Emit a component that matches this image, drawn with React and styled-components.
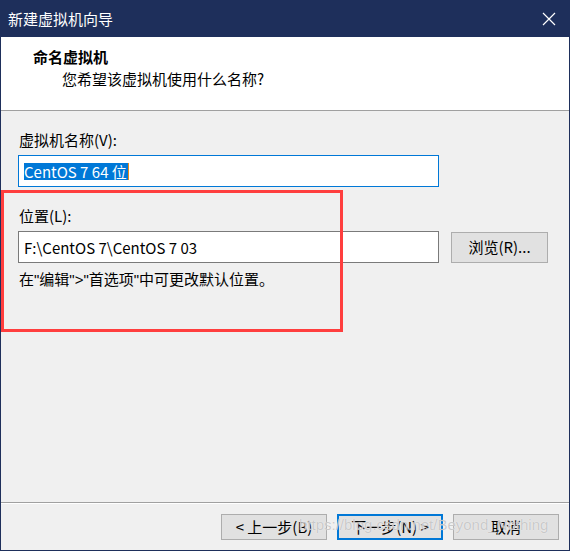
import React from "react";
import styled, { createGlobalStyle } from "styled-components";

const Global = createGlobalStyle`
  html, body { margin: 0; padding: 0; background: #f0f0f0; }
  * { box-sizing: border-box; }
  body { font-family: "Noto Sans CJK SC", "Noto Sans", sans-serif; }
`;

const Window = styled.div`
  position: relative;
  width: 570px;
  height: 551px;
  border: 1px solid #1e2f5b;
  border-top: none;
  display: flex;
  flex-direction: column;
  background: #f0f0f0;
  overflow: hidden;
`;

const TitleBar = styled.div`
  height: 37px;
  background: #1e2f5b;
  display: flex;
  align-items: center;
  justify-content: space-between;
  padding: 0 14px 0 8px;
  color: #fff;
  font-size: 15px;
  line-height: 20px;
  margin: 0 -1px;
`;

const CloseIcon = () => (
  <svg width="14" height="14" viewBox="0 0 14 14" aria-hidden="true">
    <path d="M1 1 L13 13 M13 1 L1 13" stroke="#ffffff" strokeWidth="1.2" fill="none" />
  </svg>
);

const Header = styled.div`
  height: 74px;
  background: #fff;
  border-bottom: 1px solid #a0a0a0;
  padding: 10px 0 0 32px;
`;

const HeaderTitle = styled.div`
  font-size: 15px;
  font-weight: 700;
  line-height: 20px;
  color: #000;
`;

const HeaderSub = styled.div`
  font-size: 15px;
  line-height: 20px;
  color: #000;
  padding-left: 29px;
  margin-top: 2px;
`;

const Body = styled.div`
  flex: 1;
  padding: 19px 0 0 17px;
  display: flex;
  flex-direction: column;
`;

const Label = styled.div`
  font-size: 15px;
  line-height: 20px;
  color: #000;
  padding-left: 1px;
  margin-top: ${(p) => p.$mt || 0}px;
`;

const Row = styled.div`
  display: flex;
  align-items: center;
  gap: 12px;
  margin-top: 5px;
`;

const Field = styled.div`
  width: 421px;
  height: 32px;
  background: #fff;
  border: 1px solid ${(p) => (p.$focused ? "#0078d7" : "#7a7a7a")};
  display: flex;
  align-items: center;
  padding-left: 5px;
  font-size: 15px;
  color: #000;
  white-space: pre;
`;

const Selected = styled.span`
  background: #0078d7;
  color: #fff;
  line-height: 17px;
  padding-right: 1px;
  border-right: 1px solid #e88a1a;
`;

const Button = styled.button`
  width: ${(p) => p.$w || 106}px;
  height: ${(p) => p.$h || 26}px;
  background: #e1e1e1;
  border: ${(p) => (p.$primary ? "2px solid #0078d7" : "1px solid #adadad")};
  font-family: "Noto Sans CJK SC", "Noto Sans", sans-serif;
  font-size: 15px;
  line-height: 18px;
  color: #000;
  padding: 0;
  display: flex;
  align-items: center;
  justify-content: center;
`;

const Hint = styled.div`
  font-family: "Liberation Sans", "Noto Sans CJK SC", sans-serif;
  font-size: 15px;
  line-height: 20px;
  color: #000;
  padding-left: 1px;
  margin-top: 7px;
`;

const Footer = styled.div`
  height: 48px;
  border-top: 1px solid #a0a0a0;
  box-shadow: inset 0 1px 0 #ffffff;
  display: flex;
  justify-content: flex-end;
  align-items: center;
  gap: 10px;
  padding: 1px 10px 0 0;
`;

const Annotation = styled.div`
  position: absolute;
  left: 0;
  top: 190px;
  width: 342px;
  height: 142px;
  border: 3px solid #ff3e3e;
  pointer-events: none;
`;

const Watermark = styled.div`
  position: absolute;
  left: 298px;
  top: 515px;
  font-family: "Liberation Sans", Arial, sans-serif;
  font-size: 15px;
  line-height: 20px;
  color: rgba(185, 185, 185, 0.75);
  text-shadow: 0 0 1px #ffffff;
  white-space: nowrap;
  pointer-events: none;
`;

export default function App() {
  return (
    <>
      <Global />
      <Window>
        <TitleBar>
          <span>新建虚拟机向导</span>
          <CloseIcon />
        </TitleBar>
        <Header>
          <HeaderTitle>命名虚拟机</HeaderTitle>
          <HeaderSub>您希望该虚拟机使用什么名称?</HeaderSub>
        </Header>
        <Body>
          <Label>虚拟机名称(V):</Label>
          <Row>
            <Field $focused>
              <Selected>CentOS 7 64 位</Selected>
            </Field>
          </Row>
          <Label $mt={19}>位置(L):</Label>
          <Row>
            <Field>F:\CentOS 7\CentOS 7 03</Field>
            <Button $w={97} $h={31}>浏览(R)...</Button>
          </Row>
          <Hint>在"编辑"&gt;"首选项"中可更改默认位置。</Hint>
        </Body>
        <Footer>
          <Button>&lt; 上一步(B)</Button>
          <Button $primary>下一步(N) &gt;</Button>
          <Button>取消</Button>
        </Footer>
        <Annotation />
        <Watermark>https://blog.csdn.net/Beyond_Nothing</Watermark>
      </Window>
    </>
  );
}
